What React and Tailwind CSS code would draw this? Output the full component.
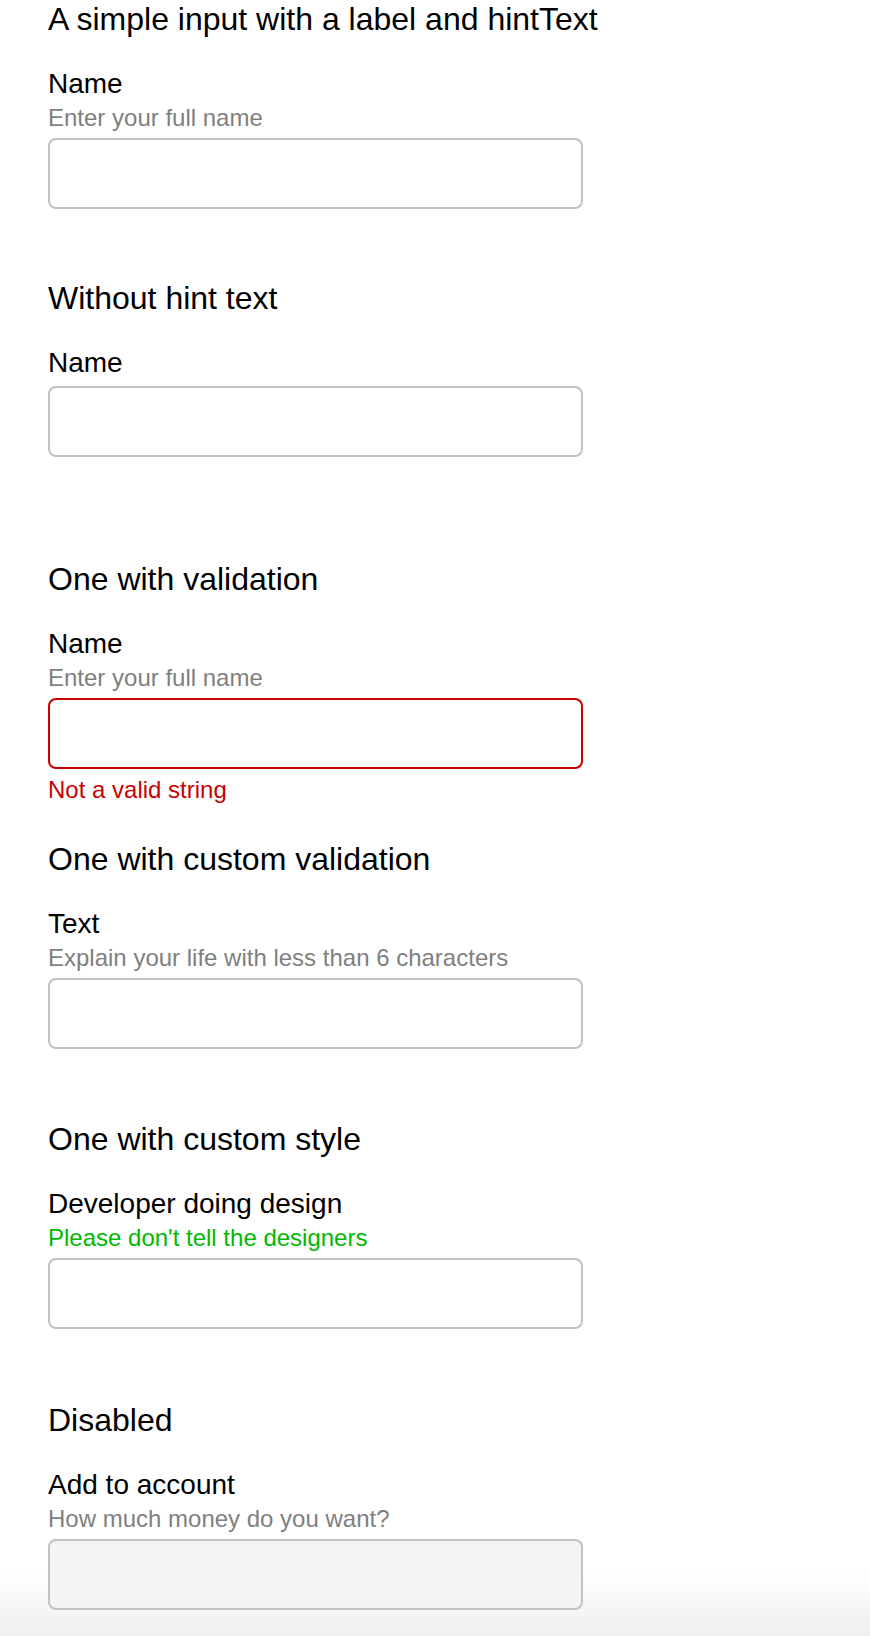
import React from 'react';

// One labelled field: label, optional hint, the input box and an optional error line
function Field({ label, hint, hintClass = 'text-[#7f7f7f]', error, disabled, invalid }) {
  const border = invalid ? 'border-[#c80000]' : 'border-[#c2c2c2]';
  const bg = disabled ? 'bg-[#f4f4f4]' : 'bg-white';

  return (
    <div className="flex flex-col">
      <label className="text-[28px] leading-[32px] text-black">{label}</label>
      {hint && (
        <span className={`mt-1 text-[24px] leading-[28px] ${hintClass}`}>{hint}</span>
      )}
      <input
        type="text"
        disabled={disabled}
        className={`${hint ? 'mt-[6px]' : 'mt-[7px]'} w-[535px] h-[71px] rounded-[8px] border-2 ${border} ${bg} outline-none`}
      />
      {error && (
        <span className="mt-[7px] text-[24px] leading-[28px] text-[#c80000]">{error}</span>
      )}
    </div>
  );
}

function Section({ title, className = '', children }) {
  return (
    <section className={className}>
      <h2 className="mb-[31px] text-[32px] leading-[36px] text-black">{title}</h2>
      {children}
    </section>
  );
}

export default function App() {
  return (
    <div
      className="w-[870px] h-[1636px] pl-[48px] pt-px bg-[linear-gradient(to_bottom,#ffffff_1570px,#efefef_1636px)]"
      style={{ fontFamily: '"Liberation Sans", Arial, sans-serif' }}
    >
      <Section title="A simple input with a label and hintText">
        <Field label="Name" hint="Enter your full name" />
      </Section>

      <Section title="Without hint text" className="mt-[71px]">
        <Field label="Name" />
      </Section>

      <Section title="One with validation" className="mt-[104px]">
        <Field label="Name" hint="Enter your full name" invalid error="Not a valid string" />
      </Section>

      <Section title="One with custom validation" className="mt-[37px]">
        <Field label="Text" hint="Explain your life with less than 6 characters" />
      </Section>

      <Section title="One with custom style" className="mt-[72px]">
        <Field
          label="Developer doing design"
          hint="Please don't tell the designers"
          hintClass="text-[#00b900]"
        />
      </Section>

      <Section title="Disabled" className="mt-[73px]">
        <Field label="Add to account" hint="How much money do you want?" disabled />
      </Section>
    </div>
  );
}
